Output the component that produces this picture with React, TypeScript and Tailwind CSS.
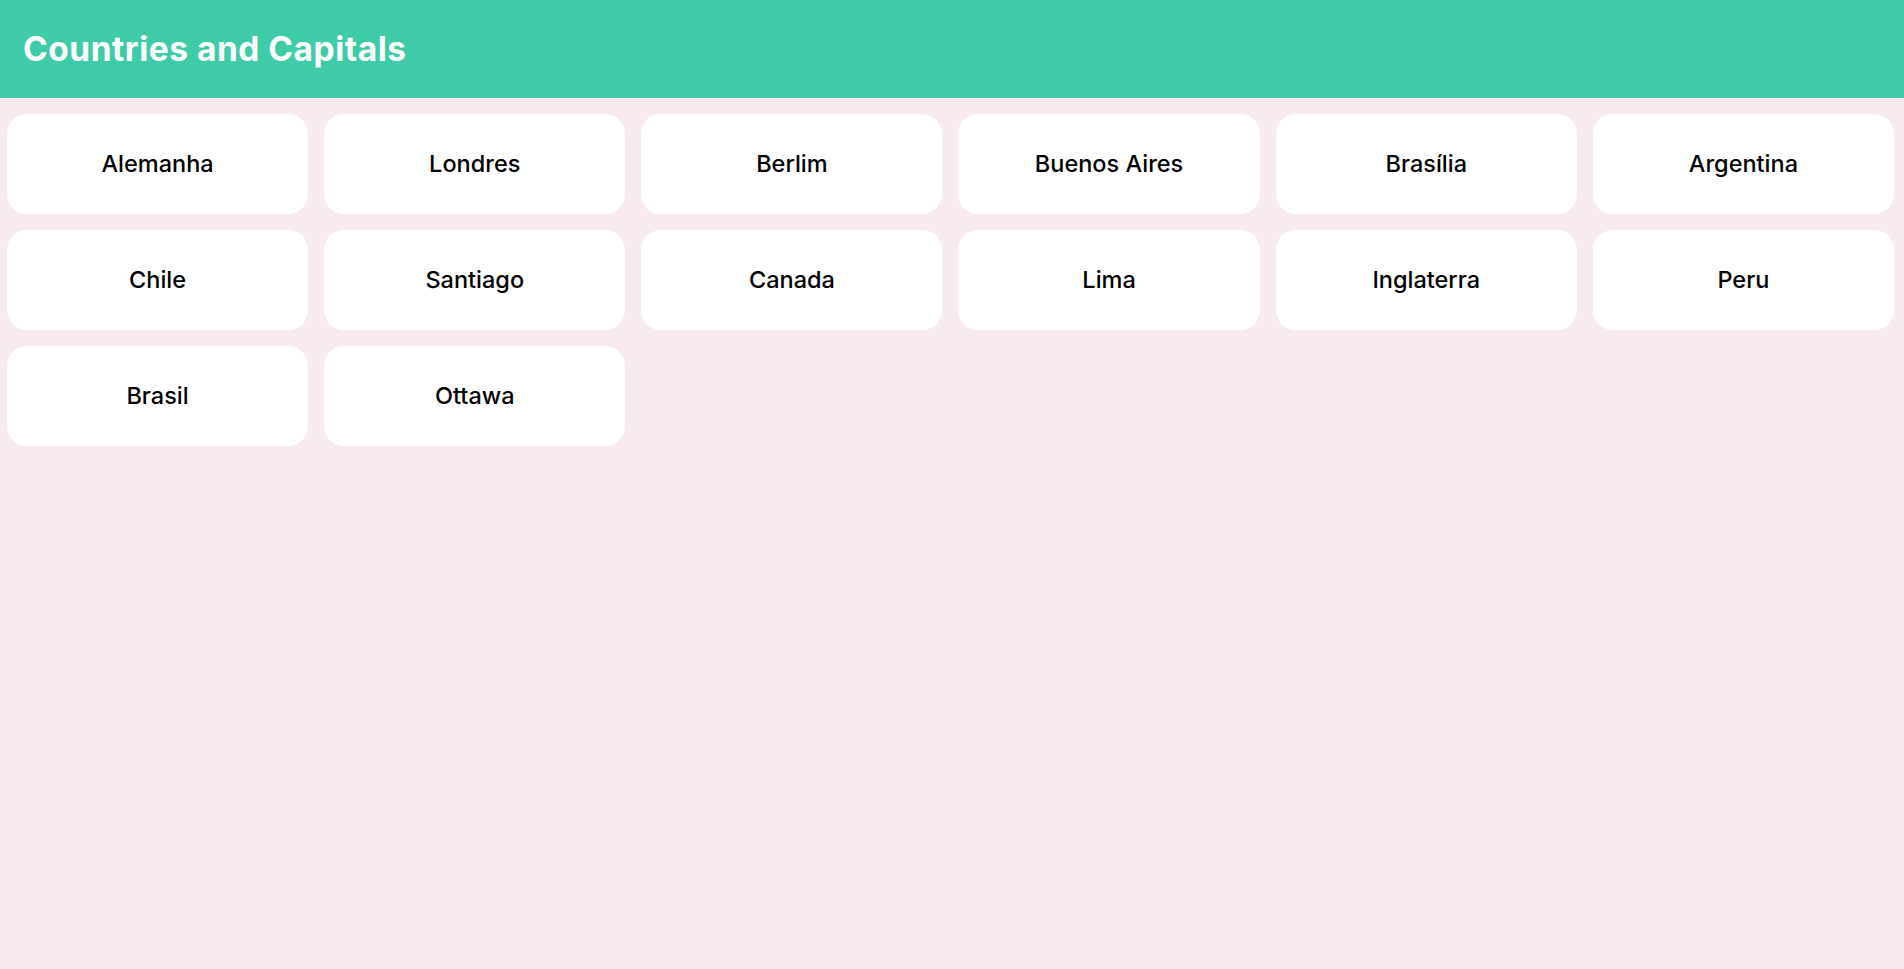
import React from 'react';

const items = [
  'Alemanha', 'Londres', 'Berlim', 'Buenos Aires', 'Brasília', 'Argentina',
  'Chile', 'Santiago', 'Canada', 'Lima', 'Inglaterra', 'Peru',
  'Brasil', 'Ottawa',
];

export default function App() {
  return (
    <div
      className="min-h-screen bg-[#f7eaf1]"
      style={{ fontFamily: 'Inter, "Noto Sans", sans-serif' }}
    >
      <header className="h-[98px] bg-[#40cba8] flex items-center pl-[23px]">
        <h1 className="text-[33.5px] font-bold text-white tracking-[0.015em]">Countries and Capitals</h1>
      </header>

      <main className="grid grid-cols-6 gap-x-[16px] gap-y-[16px] pl-[7px] pr-[10px] pt-[16px]">
        {items.map((name) => (
          <button
            key={name}
            className="h-[100px] rounded-[20px] bg-white flex items-center justify-center text-[23.5px] font-medium text-black"
          >
            {name}
          </button>
        ))}
      </main>
    </div>
  );
}
